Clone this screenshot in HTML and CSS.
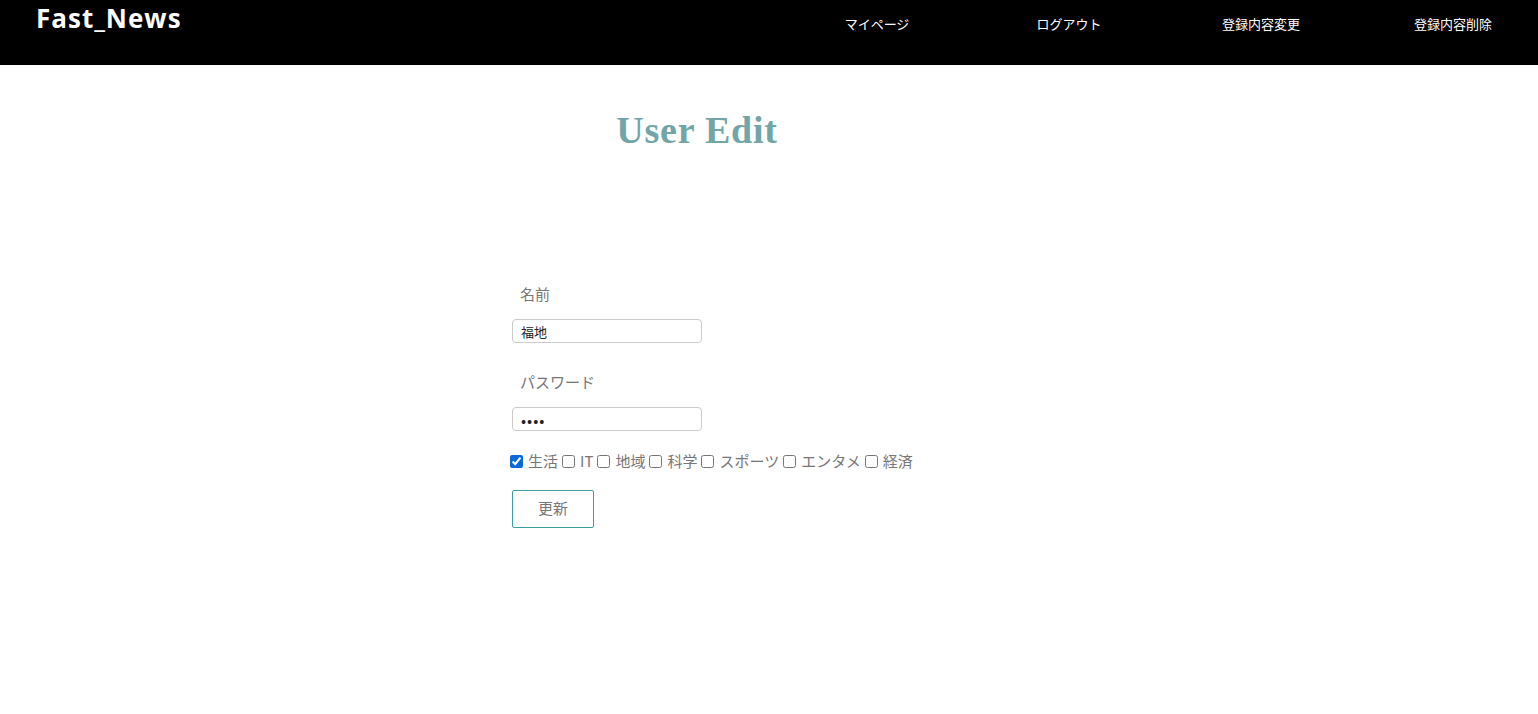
FILE: index.html
```html
<!DOCTYPE html>
<html lang="ja">
<head>
<meta charset="utf-8">
<title>User Edit</title>
<link rel="stylesheet" href="styles.css">
</head>
<body>
<header class="header">
  <div class="logo">Fast_News</div>
  <nav class="nav">
    <a class="nav-item" href="#">マイページ</a>
    <a class="nav-item" href="#">ログアウト</a>
    <a class="nav-item" href="#">登録内容変更</a>
    <a class="nav-item" href="#">登録内容削除</a>
  </nav>
</header>
<main class="main">
  <h1 class="title">User Edit</h1>
  <form class="form">
    <label class="label">名前</label>
    <input class="input" type="text" value="福地">
    <label class="label">パスワード</label>
    <input class="input input-pass" type="password" value="abcd">
    <div class="checks">
      <input class="check first" type="checkbox" checked><span>生活</span>
      <input class="check" type="checkbox"><span>IT</span>
      <input class="check" type="checkbox"><span>地域</span>
      <input class="check" type="checkbox"><span>科学</span>
      <input class="check" type="checkbox"><span>スポーツ</span>
      <input class="check" type="checkbox"><span>エンタメ</span>
      <input class="check" type="checkbox"><span>経済</span>
    </div>
    <button class="button" type="button">更新</button>
  </form>
</main>
</body>
</html>
```
FILE: styles.css
```css
* { box-sizing: border-box; }
body {
  margin: 0;
  font-family: "Noto Sans CJK JP", "Noto Sans", sans-serif;
  background: #fff;
}
.header {
  height: 65px;
  background: #000;
  display: flex;
  align-items: flex-start;
  justify-content: space-between;
}
.logo {
  font-family: "Open Sans", "Noto Sans", sans-serif;
  font-weight: bold;
  font-size: 26px;
  letter-spacing: 1px;
  color: #fff;
  padding-left: 36px;
  padding-top: 2px;
  line-height: 32px;
}
.nav {
  display: flex;
  padding-top: 15px;
  margin-right: -11px;
}
.nav-item {
  width: 192px;
  text-align: center;
  color: #fff;
  font-size: 13px;
  line-height: 18px;
  text-decoration: none;
}
.main {
  padding-left: 512px;
}
.title {
  width: 370px;
  margin: 0;
  padding-top: 42px;
  text-align: center;
  font-family: "Liberation Serif", "Times New Roman", serif;
  font-weight: bold;
  font-size: 38px;
  line-height: 46px;
  color: #72a5a7;
  letter-spacing: 0.8px;
}
.form {
  display: flex;
  flex-direction: column;
  align-items: flex-start;
  padding-top: 130px;
}
.label {
  font-size: 15px;
  color: #777;
  padding-left: 8px;
  line-height: 22px;
  margin-bottom: 14px;
}
.input {
  width: 190px;
  height: 24px;
  border: 1px solid #ccc;
  border-radius: 4px;
  padding: 0 8px;
  font-size: 13px;
  color: #222;
  font-family: "Noto Sans CJK JP", sans-serif;
  margin-bottom: 28px;
}
.input-pass {
  margin-bottom: 19px;
  font-size: 15px;
  letter-spacing: 1px;
}
.checks {
  display: flex;
  align-items: center;
  font-size: 15px;
  color: #777;
  line-height: 22px;
}
.check {
  width: 13px;
  height: 13px;
  margin: 0 5px 0 0;
  accent-color: #0b6ad8;
}
.check.first { margin-left: -2px; }
.checks span { margin-right: 4px; }
.button {
  margin-top: 18px;
  width: 82px;
  height: 38px;
  padding: 0 0 3px;
  border: 1px solid #3a9ea6;
  border-radius: 2px;
  background: #fff;
  color: #777;
  font-size: 15px;
  font-family: "Noto Sans CJK JP", sans-serif;
}
```
